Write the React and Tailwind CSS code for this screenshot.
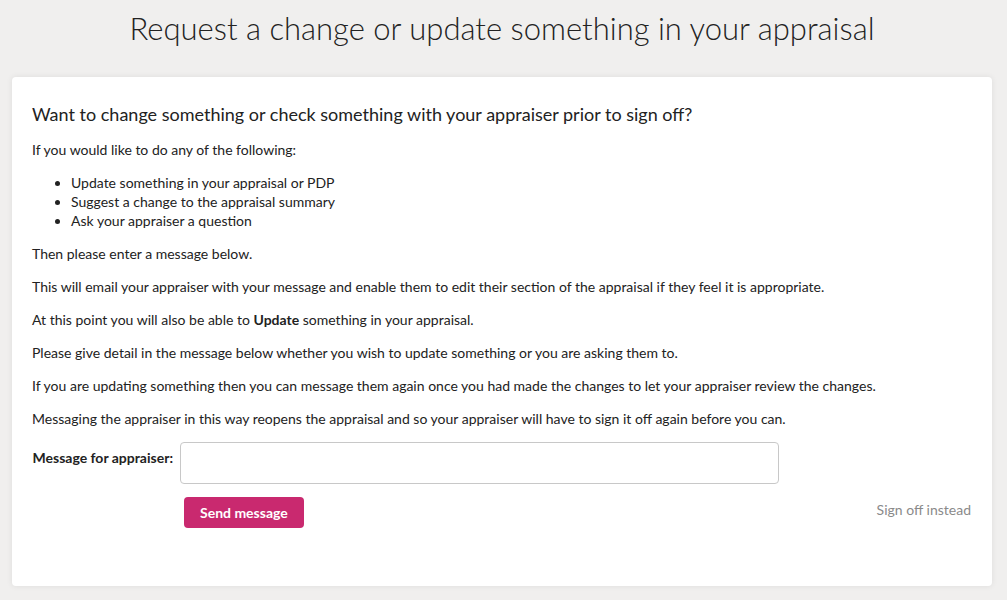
export default function App() {
  return (
    <div className="min-h-[600px] bg-[#f0efee] pl-3 pr-[15px] pb-3 font-['Lato',sans-serif] text-[#222]">
      <h1 className="pt-[8px] pb-[29px] text-center text-[31px] font-light leading-[40px] text-[#222]">
        Request a change or update something in your appraisal
      </h1>

      <div className="rounded-[4px] bg-white pl-5 pr-[21px] pt-[23px] pb-[58px] shadow-[0_0_6px_rgba(0,0,0,0.08)]">
        <h2 className="mb-[12px] text-[18px] leading-[28px]">
          Want to change something or check something with your appraiser prior to sign off?
        </h2>

        <div className="text-[14px] leading-[20px]">
          <p className="mb-[13px]">If you would like to do any of the following:</p>
          <ul className="mb-[14px] list-disc pl-[39px] leading-[19px]">
            <li>Update something in your appraisal or PDP</li>
            <li>Suggest a change to the appraisal summary</li>
            <li>Ask your appraiser a question</li>
          </ul>
          <p className="mb-[13px]">Then please enter a message below.</p>
          <p className="mb-[13px]">
            This will email your appraiser with your message and enable them to edit their section of the appraisal if they feel it is appropriate.
          </p>
          <p className="mb-[13px]">
            At this point you will also be able to <b className="font-bold">Update</b> something in your appraisal.
          </p>
          <p className="mb-[13px]">
            Please give detail in the message below whether you wish to update something or you are asking them to.
          </p>
          <p className="mb-[13px]">
            If you are updating something then you can message them again once you had made the changes to let your appraiser review the changes.
          </p>
          <p className="mb-[13px]">
            Messaging the appraiser in this way reopens the appraisal and so your appraiser will have to sign it off again before you can.
          </p>
        </div>

        <div className="mt-[12px] flex items-start gap-[7px]">
          <label className="w-[141px] shrink-0 pt-[6px] text-right text-[14px] font-bold leading-[20px]">
            Message for appraiser:
          </label>
          <textarea className="h-[42px] w-[599px] resize-none rounded-[4px] border border-[#c8c8c8] bg-white px-2 py-1 text-[14px] outline-none" />
        </div>

        <div className="mt-[13px] flex items-start justify-between pl-[152px]">
          <button className="h-[31px] rounded-[4px] bg-[#c9296f] px-[16px] text-[14px] font-bold text-white">
            Send message
          </button>
          <a className="mt-[3px] text-[14px] leading-[20px] text-[#8a8a8a]">Sign off instead</a>
        </div>
      </div>
    </div>
  );
}
